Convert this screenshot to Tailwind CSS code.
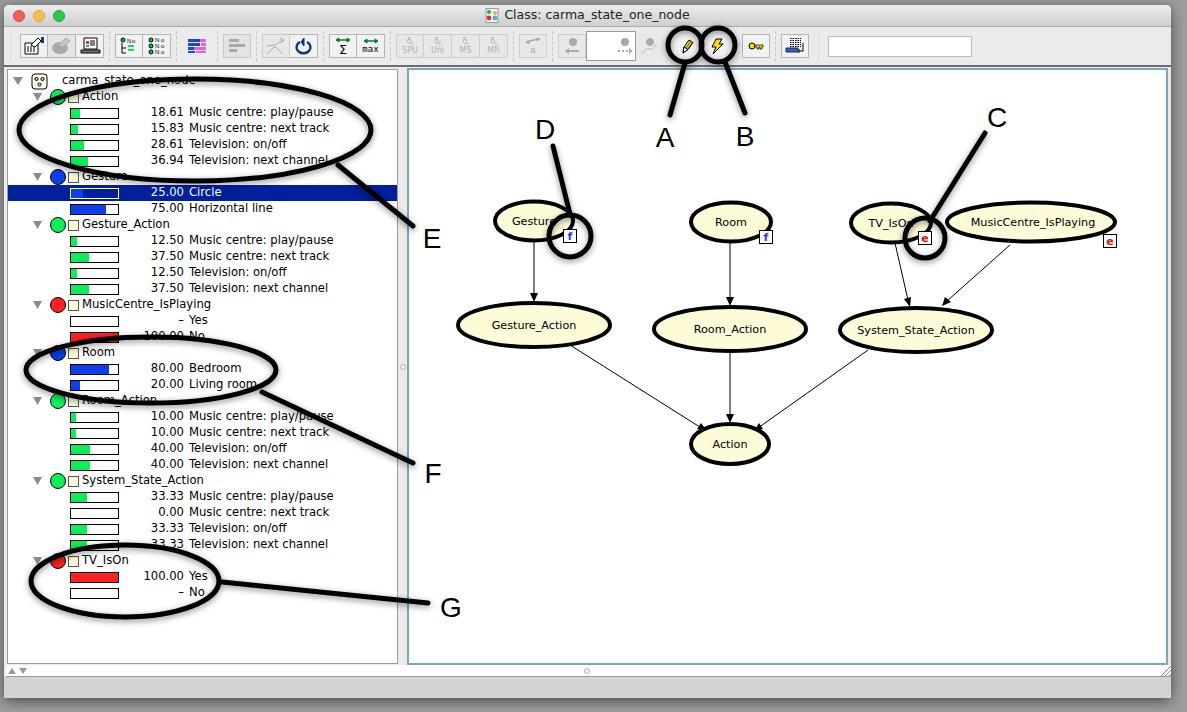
<!doctype html>
<html><head><meta charset="utf-8"><title>Class: carma_state_one_node</title>
<script src="https://cdn.jsdelivr.net/npm/@tailwindcss/browser@4"></script></head>
<body class="bg-[#9e9e9e] m-0 overflow-hidden font-['DejaVu_Sans',sans-serif] text-[11.6px] text-black">
<div class="relative w-[1187px] h-[712px] overflow-hidden">
<div class="ml-[4px] mt-[5px] w-[1167px] h-[693px] flex flex-col rounded-t-[5px] bg-[#ebebeb] shadow-[0_3px_14px_rgba(0,0,0,0.55)] overflow-hidden">
  <!-- title bar -->
  <div class="relative h-[22px] shrink-0 flex items-center justify-center bg-gradient-to-b from-[#ececec] to-[#cfcfcf] border-b border-[#a9a9a9] gap-[5px] text-[12.5px] text-[#222]">
    <div class="absolute left-[9px] top-[5px] flex gap-[8px]">
      <span class="w-3 h-3 rounded-full bg-[#f0605a] border border-[#d9483f]"></span>
      <span class="w-3 h-3 rounded-full bg-[#f6bd4f] border border-[#dda032]"></span>
      <span class="w-3 h-3 rounded-full bg-[#2fc64e] border border-[#1fa838]"></span>
    </div>
    <svg width="14" height="15" viewBox="0 0 14 15"><rect x="1" y="0.5" width="12" height="14" fill="#f4f4f4" stroke="#999"/><circle cx="4" cy="4" r="2" fill="#2ca84a"/><circle cx="10" cy="5" r="2" fill="#e8b830"/><circle cx="4" cy="10" r="2.4" fill="#e02a2a"/><circle cx="10" cy="10" r="2.4" fill="#35b8e0"/></svg>
    <span>Class: carma_state_one_node</span>
  </div>
  <!-- toolbar -->
  <div class="h-[40px] shrink-0 flex items-center pl-[6px] border-b-2 border-[#6e6e6e]">
    <i class="w-px h-[30px] bg-[#dadada] mr-[9px]"></i>
    <div class="flex border border-[#b5b5b5] h-[24px]">
      <button class="w-[27px] flex items-center justify-center bg-[#f2f2f2] border-r border-[#b5b5b5]"><svg width="22" height="20" viewBox="0 0 22 20" fill="none" stroke="#000"><path d="M2 7h13v11H2z" fill="#fff"/><path d="M4 11h9M4 13h9M4 15h9" stroke-dasharray="2 1"/><path d="M8 9l7-7 3 3-6 6z" fill="#fff"/><path d="M18 1h3v6h-3z" fill="#123a8c" stroke="none"/></svg></button>
      <button class="w-[28px] flex items-center justify-center bg-[#e4e4e4] border-r border-[#b5b5b5]"><svg width="22" height="20" viewBox="0 0 22 20"><ellipse cx="9" cy="12" rx="8" ry="6" fill="#a9a9a9"/><path d="M7 9l8-7 4 3-7 6z" fill="#c4c4c4" stroke="#aaa"/></svg></button>
      <button class="w-[27px] flex items-center justify-center bg-[#f2f2f2]"><svg width="22" height="20" viewBox="0 0 22 20" fill="none" stroke="#000"><path d="M5 2h13v11H5z" fill="#fff"/><path d="M7 5h3v3H7z" fill="#d33" stroke="none"/><path d="M7 9h3v2H7z" fill="#2a8" stroke="none"/><path d="M11 5h5M11 7h5M11 9h5"/><path d="M2 14h19v3H2z" fill="#777"/></svg></button>
    </div>
    <i class="w-0 h-[30px] border-l border-dashed border-[#c4c4c4] mx-[5px]"></i>
    <div class="flex border border-[#b5b5b5] h-[24px]">
      <button class="w-[27px] flex items-center justify-center bg-[#f2f2f2] border-r border-[#b5b5b5]"><svg width="20" height="18" viewBox="0 0 20 18" fill="none"><circle cx="4" cy="3" r="2" fill="#0c4" stroke="#000"/><path d="M3 6v10h4M3 11h4" stroke="#000"/><path d="M9 8h6v2H9zM9 12h6v2H9z" fill="#1d6"/><text x="8" y="6" font-size="6" fill="#000" font-family="Liberation Sans">N</text><text x="13" y="6" font-size="6" fill="#000" font-family="Liberation Sans">o</text></svg></button>
      <button class="w-[27px] flex items-center justify-center bg-[#f2f2f2]"><svg width="20" height="18" viewBox="0 0 20 18" fill="none" font-family="Liberation Sans" font-size="6"><circle cx="4" cy="3" r="2" fill="#0c4" stroke="#000"/><circle cx="4" cy="9" r="2" fill="#0c4" stroke="#000"/><circle cx="4" cy="15" r="2" fill="#0c4" stroke="#000"/><text x="8" y="5" fill="#000">N</text><text x="14" y="5" fill="#000">o</text><text x="8" y="11" fill="#000">N</text><text x="14" y="11" fill="#000">o</text><text x="8" y="17" fill="#000">N</text><text x="14" y="17" fill="#000">o</text></svg></button>
    </div>
    <i class="w-0 h-[30px] border-l border-dashed border-[#c4c4c4] ml-[5px] mr-[6px]"></i>
    <button class="w-[28px] h-[24px] flex items-center justify-center"><svg width="20" height="16" viewBox="0 0 20 16"><path d="M1 1h13v3H1zM1 9h6v3H1zM1 5h12v3H1z" fill="#1747d8"/><path d="M13 1h6v3h-6zM14 5h5v3h-5zM7 9h12v3H7zM9 13h10v2H9z" fill="#f05ce0"/><path d="M1 13h7v2H1z" fill="#1747d8"/></svg></button>
    <i class="w-0 h-[30px] border-l border-dashed border-[#c4c4c4] ml-[6px] mr-[5px]"></i>
    <button class="w-[28px] h-[24px] flex items-center justify-center border border-[#c9c9c9] bg-[#e4e4e4]"><svg width="18" height="14" viewBox="0 0 18 14"><path d="M1 0h10v3H1zM1 5h16v3H1zM1 10h8v3H1z" fill="#aaa"/></svg></button>
    <i class="w-0 h-[30px] border-l border-dashed border-[#c4c4c4] mx-[5px]"></i>
    <div class="flex h-[24px]">
      <button class="w-[28px] flex items-center justify-center border border-[#c9c9c9] bg-[#e8e8e8]"><svg width="20" height="18" viewBox="0 0 20 18" fill="none" stroke="#aaa"><path d="M1 9l8-1 8-5M1 17l7-7 3 1 5 6M14 1l4 2-3 3"/></svg></button>
      <button class="w-[28px] flex items-center justify-center border border-l-0 border-[#b5b5b5] bg-[#f2f2f2]"><svg width="20" height="18" viewBox="0 0 20 18" fill="none" stroke="#0d2f8c" stroke-width="2.4"><path d="M6 5a7 6 0 1 0 7 0"/><path d="M10 1v8l-3-4z" fill="#0d2f8c" stroke-width="1"/></svg></button>
    </div>
    <i class="w-0 h-[30px] border-l border-dashed border-[#c4c4c4] mx-[5px]"></i>
    <div class="flex h-[24px]">
      <button class="w-[28px] flex flex-col items-center justify-center border border-[#b5b5b5] bg-[#f2f2f2]"><svg width="16" height="6" viewBox="0 0 16 6" fill="#0b7a2c" stroke="#0b7a2c"><path d="M1 3h14" stroke-width="1.4"/><path d="M1 3l3-2v4zM15 3l-3-2v4z"/></svg><span class="text-[13px] leading-[13px]">Σ</span></button>
      <button class="w-[28px] flex flex-col items-center justify-center border border-l-0 border-[#b5b5b5] bg-[#f2f2f2]"><svg width="16" height="6" viewBox="0 0 16 6" fill="#0b7a2c" stroke="#0b7a2c"><path d="M1 3h14" stroke-width="1.4"/><path d="M1 3l3-2v4zM15 3l-3-2v4z"/></svg><span class="text-[9px] leading-[11px] font-['DejaVu_Sans_Mono',monospace]">max</span></button>
    </div>
    <i class="w-0 h-[30px] border-l border-dashed border-[#c4c4c4] mx-[5px]"></i>
    <div class="flex h-[24px] text-[#b0b0b0] text-[8px] leading-[9px] text-center">
      <button class="w-[28px] border border-[#cdcdcd] bg-[#e8e8e8]">δ<sub class="text-[6px]">J</sub><br>SPU</button>
      <button class="w-[28px] border border-l-0 border-[#cdcdcd] bg-[#e8e8e8]">δ<sub class="text-[6px]">J</sub><br>Uni</button>
      <button class="w-[28px] border border-l-0 border-[#cdcdcd] bg-[#e8e8e8]">δ<sub class="text-[6px]">J</sub><br>MS</button>
      <button class="w-[28px] border border-l-0 border-[#cdcdcd] bg-[#e8e8e8]">δ<sub class="text-[6px]">J</sub><br>MR</button>
    </div>
    <i class="w-0 h-[30px] border-l border-dashed border-[#c4c4c4] mx-[5px]"></i>
    <button class="w-[28px] h-[24px] flex flex-col items-center justify-center border border-[#cdcdcd] bg-[#e8e8e8] text-[#aaa] text-[9px] leading-[10px]"><svg width="16" height="8" viewBox="0 0 16 8" fill="#aaa" stroke="#aaa"><path d="M1 5l12-3" stroke-width="1.4"/><path d="M15 2l-3-1v3zM1 5l3-1v3z"/></svg>a</button>
    <i class="w-0 h-[30px] border-l border-dashed border-[#c4c4c4] mx-[5px]"></i>
    <div class="flex h-[30px] items-center">
      <button class="w-[28px] h-[24px] flex items-center justify-center border border-[#cdcdcd] bg-[#e8e8e8]"><svg width="16" height="18" viewBox="0 0 16 18" fill="#a9a9a9"><circle cx="9" cy="5" r="4"/><path d="M1 14l4-3v2h10v2H5v2z"/></svg></button>
      <div class="w-[50px] h-[30px] border border-[#9a9a9a] bg-white flex flex-col items-end justify-center pr-[1px]"><svg width="16" height="18" viewBox="0 0 16 18" fill="#a9a9a9"><circle cx="7" cy="5" r="4"/><path d="M0 13h2v2H0zM4 13h2v2H4zM8 13h2v2H8zM11 11l4 3-4 3z"/></svg></div>
      <button class="w-[28px] h-[24px] flex items-center justify-center bg-[#e8e8e8]"><svg width="18" height="18" viewBox="0 0 18 18" fill="#a9a9a9" stroke="#a9a9a9"><circle cx="9" cy="5" r="3.5"/><path d="M1 16l6-5 3 2 6-6" fill="none" stroke-dasharray="3 1"/></svg></button>
    </div>
    <div class="flex h-[24px] ml-[9px]">
      <button class="w-[29px] flex items-center justify-center bg-[#f2f2f2]"><svg width="14" height="17" viewBox="0 0 14 17" fill="none"><path d="M2 15l1-6 5-7 4 2.5-5 7z" fill="#f4d90b" stroke="#000"/><path d="M2 15l1-6 4 2.5z" fill="#fff" stroke="#000"/><path d="M5 10l5-7M7 11l4-6" stroke="#000" stroke-width=".6"/></svg></button>
      <button class="w-[29px] flex items-center justify-center bg-[#f2f2f2]"><svg width="14" height="17" viewBox="0 0 14 17"><path d="M6 1h6L9 6h4L3 16l3-7H2z" fill="#f4d90b" stroke="#000"/></svg></button>
    </div>
    <i class="w-0 h-[30px] ml-[5px] mr-[5px] border-l border-transparent"></i>
    <button class="w-[28px] h-[24px] flex items-center justify-center border border-[#b5b5b5] bg-[#f2f2f2]"><svg width="16" height="9" viewBox="0 0 16 9"><circle cx="4" cy="4" r="3" fill="#f4d90b" stroke="#000"/><path d="M7 3h8v2h-1v2h-2V5h-1v2H9V5H7z" fill="#f4d90b" stroke="#000" stroke-width=".7"/></svg></button>
    <i class="w-0 h-[30px] border-l border-dashed border-[#c4c4c4] mx-[5px]"></i>
    <button class="w-[28px] h-[24px] flex items-center justify-center border border-[#b5b5b5] bg-[#f2f2f2]"><svg width="20" height="18" viewBox="0 0 20 18"><path d="M5 1.5h11M5 3.5h11M5 5.5h11M5 7.5h11M5 9.5h11" stroke="#000" stroke-dasharray="1.5 1"/><path d="M1 11h12v4H1z" fill="#3a5fb0" stroke="#12286a"/><path d="M18 6v8h-4M14 12v4" stroke="#000" fill="none"/></svg></button>
    <i class="w-px h-[30px] bg-[#dadada] mx-[9px]"></i>
    <div class="w-[144px] h-[21px] border border-[#bcbcbc] bg-white"></div>
  </div>
  <!-- panes -->
  <div class="h-[597px] shrink-0 flex pt-[2px] pl-[2px] pr-[4px]">
    <div class="w-[391px] ml-px border border-[#9b9b9b] bg-white overflow-hidden pt-[3px]">
      <div class="h-4 flex items-center"><svg class="ml-[5px]" width="10" height="8" viewBox="0 0 10 8"><path d="M0 0h10L5 8z" fill="#8c8c8c"/></svg><svg class="ml-[8px]" width="17" height="17" viewBox="0 0 17 17" fill="none" stroke="#000"><rect x="1" y="1" width="15" height="15" rx="3" fill="#fff"/><circle cx="5.5" cy="6" r="1.6" fill="#f2dc2c"/><circle cx="11.5" cy="6" r="1.6" fill="#f2dc2c"/><circle cx="8.5" cy="11.5" r="1.6" fill="#f2dc2c"/></svg><span class="ml-[14px]">carma_state_one_node</span></div>

      <div class="h-4 flex items-center"><svg class="ml-[25px]" width="9" height="8" viewBox="0 0 9 8"><path d="M0 0h9L4.5 8z" fill="#8c8c8c"/></svg><span class="ml-[8px] w-4 h-4 rounded-full border border-black bg-[#0bef5c]"></span><span class="ml-[2px] w-[11px] h-[11px] border border-[#555] bg-[#fdfbd8]"></span><span class="ml-[3px]">Action</span></div>
      <div class="h-4 flex items-center pl-[62px]"><div class="w-[49px] h-[11px] border border-black"><div class="h-full bg-[#0bef5c]" style="width:18.61%"></div></div><span class="w-[65px] text-right">18.61</span><span class="ml-[5px]">Music centre: play/pause</span></div>
      <div class="h-4 flex items-center pl-[62px]"><div class="w-[49px] h-[11px] border border-black"><div class="h-full bg-[#0bef5c]" style="width:15.83%"></div></div><span class="w-[65px] text-right">15.83</span><span class="ml-[5px]">Music centre: next track</span></div>
      <div class="h-4 flex items-center pl-[62px]"><div class="w-[49px] h-[11px] border border-black"><div class="h-full bg-[#0bef5c]" style="width:28.61%"></div></div><span class="w-[65px] text-right">28.61</span><span class="ml-[5px]">Television: on/off</span></div>
      <div class="h-4 flex items-center pl-[62px]"><div class="w-[49px] h-[11px] border border-black"><div class="h-full bg-[#0bef5c]" style="width:36.94%"></div></div><span class="w-[65px] text-right">36.94</span><span class="ml-[5px]">Television: next channel</span></div>

      <div class="h-4 flex items-center"><svg class="ml-[25px]" width="9" height="8" viewBox="0 0 9 8"><path d="M0 0h9L4.5 8z" fill="#8c8c8c"/></svg><span class="ml-[8px] w-4 h-4 rounded-full border border-black bg-[#0b3ff0]"></span><span class="ml-[2px] w-[11px] h-[11px] border border-[#555] bg-[#fdfbd8]"></span><span class="ml-[3px]">Gesture</span></div>
      <div class="h-4 flex items-center pl-[62px] bg-[#00209c] text-white"><div class="w-[49px] h-[11px] border border-white"><div class="h-full bg-[#0b3ff0]" style="width:25%"></div></div><span class="w-[65px] text-right">25.00</span><span class="ml-[5px]">Circle</span></div>
      <div class="h-4 flex items-center pl-[62px]"><div class="w-[49px] h-[11px] border border-black"><div class="h-full bg-[#0b3ff0]" style="width:75%"></div></div><span class="w-[65px] text-right">75.00</span><span class="ml-[5px]">Horizontal line</span></div>

      <div class="h-4 flex items-center"><svg class="ml-[25px]" width="9" height="8" viewBox="0 0 9 8"><path d="M0 0h9L4.5 8z" fill="#8c8c8c"/></svg><span class="ml-[8px] w-4 h-4 rounded-full border border-black bg-[#0bef5c]"></span><span class="ml-[2px] w-[11px] h-[11px] border border-[#555] bg-[#fdfbd8]"></span><span class="ml-[3px]">Gesture_Action</span></div>
      <div class="h-4 flex items-center pl-[62px]"><div class="w-[49px] h-[11px] border border-black"><div class="h-full bg-[#0bef5c]" style="width:12.5%"></div></div><span class="w-[65px] text-right">12.50</span><span class="ml-[5px]">Music centre: play/pause</span></div>
      <div class="h-4 flex items-center pl-[62px]"><div class="w-[49px] h-[11px] border border-black"><div class="h-full bg-[#0bef5c]" style="width:37.5%"></div></div><span class="w-[65px] text-right">37.50</span><span class="ml-[5px]">Music centre: next track</span></div>
      <div class="h-4 flex items-center pl-[62px]"><div class="w-[49px] h-[11px] border border-black"><div class="h-full bg-[#0bef5c]" style="width:12.5%"></div></div><span class="w-[65px] text-right">12.50</span><span class="ml-[5px]">Television: on/off</span></div>
      <div class="h-4 flex items-center pl-[62px]"><div class="w-[49px] h-[11px] border border-black"><div class="h-full bg-[#0bef5c]" style="width:37.5%"></div></div><span class="w-[65px] text-right">37.50</span><span class="ml-[5px]">Television: next channel</span></div>

      <div class="h-4 flex items-center"><svg class="ml-[25px]" width="9" height="8" viewBox="0 0 9 8"><path d="M0 0h9L4.5 8z" fill="#8c8c8c"/></svg><span class="ml-[8px] w-4 h-4 rounded-full border border-black bg-[#ff2020]"></span><span class="ml-[2px] w-[11px] h-[11px] border border-[#555] bg-[#fdfbd8]"></span><span class="ml-[3px]">MusicCentre_IsPlaying</span></div>
      <div class="h-4 flex items-center pl-[62px]"><div class="w-[49px] h-[11px] border border-black"></div><span class="w-[65px] text-right">–</span><span class="ml-[5px]">Yes</span></div>
      <div class="h-4 flex items-center pl-[62px]"><div class="w-[49px] h-[11px] border border-black"><div class="h-full bg-[#ff2020]" style="width:100%"></div></div><span class="w-[65px] text-right">100.00</span><span class="ml-[5px]">No</span></div>

      <div class="h-4 flex items-center"><svg class="ml-[25px]" width="9" height="8" viewBox="0 0 9 8"><path d="M0 0h9L4.5 8z" fill="#8c8c8c"/></svg><span class="ml-[8px] w-4 h-4 rounded-full border border-black bg-[#0b3ff0]"></span><span class="ml-[2px] w-[11px] h-[11px] border border-[#555] bg-[#fdfbd8]"></span><span class="ml-[3px]">Room</span></div>
      <div class="h-4 flex items-center pl-[62px]"><div class="w-[49px] h-[11px] border border-black"><div class="h-full bg-[#0b3ff0]" style="width:80%"></div></div><span class="w-[65px] text-right">80.00</span><span class="ml-[5px]">Bedroom</span></div>
      <div class="h-4 flex items-center pl-[62px]"><div class="w-[49px] h-[11px] border border-black"><div class="h-full bg-[#0b3ff0]" style="width:20%"></div></div><span class="w-[65px] text-right">20.00</span><span class="ml-[5px]">Living room</span></div>

      <div class="h-4 flex items-center"><svg class="ml-[25px]" width="9" height="8" viewBox="0 0 9 8"><path d="M0 0h9L4.5 8z" fill="#8c8c8c"/></svg><span class="ml-[8px] w-4 h-4 rounded-full border border-black bg-[#0bef5c]"></span><span class="ml-[2px] w-[11px] h-[11px] border border-[#555] bg-[#fdfbd8]"></span><span class="ml-[3px]">Room_Action</span></div>
      <div class="h-4 flex items-center pl-[62px]"><div class="w-[49px] h-[11px] border border-black"><div class="h-full bg-[#0bef5c]" style="width:10%"></div></div><span class="w-[65px] text-right">10.00</span><span class="ml-[5px]">Music centre: play/pause</span></div>
      <div class="h-4 flex items-center pl-[62px]"><div class="w-[49px] h-[11px] border border-black"><div class="h-full bg-[#0bef5c]" style="width:10%"></div></div><span class="w-[65px] text-right">10.00</span><span class="ml-[5px]">Music centre: next track</span></div>
      <div class="h-4 flex items-center pl-[62px]"><div class="w-[49px] h-[11px] border border-black"><div class="h-full bg-[#0bef5c]" style="width:40%"></div></div><span class="w-[65px] text-right">40.00</span><span class="ml-[5px]">Television: on/off</span></div>
      <div class="h-4 flex items-center pl-[62px]"><div class="w-[49px] h-[11px] border border-black"><div class="h-full bg-[#0bef5c]" style="width:40%"></div></div><span class="w-[65px] text-right">40.00</span><span class="ml-[5px]">Television: next channel</span></div>

      <div class="h-4 flex items-center"><svg class="ml-[25px]" width="9" height="8" viewBox="0 0 9 8"><path d="M0 0h9L4.5 8z" fill="#8c8c8c"/></svg><span class="ml-[8px] w-4 h-4 rounded-full border border-black bg-[#0bef5c]"></span><span class="ml-[2px] w-[11px] h-[11px] border border-[#555] bg-[#fdfbd8]"></span><span class="ml-[3px]">System_State_Action</span></div>
      <div class="h-4 flex items-center pl-[62px]"><div class="w-[49px] h-[11px] border border-black"><div class="h-full bg-[#0bef5c]" style="width:33.33%"></div></div><span class="w-[65px] text-right">33.33</span><span class="ml-[5px]">Music centre: play/pause</span></div>
      <div class="h-4 flex items-center pl-[62px]"><div class="w-[49px] h-[11px] border border-black"></div><span class="w-[65px] text-right">0.00</span><span class="ml-[5px]">Music centre: next track</span></div>
      <div class="h-4 flex items-center pl-[62px]"><div class="w-[49px] h-[11px] border border-black"><div class="h-full bg-[#0bef5c]" style="width:33.33%"></div></div><span class="w-[65px] text-right">33.33</span><span class="ml-[5px]">Television: on/off</span></div>
      <div class="h-4 flex items-center pl-[62px]"><div class="w-[49px] h-[11px] border border-black"><div class="h-full bg-[#0bef5c]" style="width:33.33%"></div></div><span class="w-[65px] text-right">33.33</span><span class="ml-[5px]">Television: next channel</span></div>

      <div class="h-4 flex items-center"><svg class="ml-[25px]" width="9" height="8" viewBox="0 0 9 8"><path d="M0 0h9L4.5 8z" fill="#8c8c8c"/></svg><span class="ml-[8px] w-4 h-4 rounded-full border border-black bg-[#ff2020]"></span><span class="ml-[2px] w-[11px] h-[11px] border border-[#555] bg-[#fdfbd8]"></span><span class="ml-[3px]">TV_IsOn</span></div>
      <div class="h-4 flex items-center pl-[62px]"><div class="w-[49px] h-[11px] border border-black"><div class="h-full bg-[#ff2020]" style="width:100%"></div></div><span class="w-[65px] text-right">100.00</span><span class="ml-[5px]">Yes</span></div>
      <div class="h-4 flex items-center pl-[62px]"><div class="w-[49px] h-[11px] border border-black"></div><span class="w-[65px] text-right">–</span><span class="ml-[5px]">No</span></div>
    </div>
    <div class="w-[10px] flex items-center justify-center"><span class="w-[6px] h-[6px] rounded-full border border-[#b5b5b5] bg-[#f4f4f4]"></span></div>
    <div class="flex-1 border border-[#5ab0ea] outline outline-1 outline-[#9b9b9b] bg-white"></div>
  </div>
  <!-- bottom strip -->
  <div class="h-[12px] shrink-0 mt-px ml-[2px] flex items-center justify-between bg-white border-b border-[#9a9a9a] pl-[2px] relative">
    <div class="flex gap-[3px]"><svg width="8" height="6" viewBox="0 0 8 6"><path d="M4 0l4 6H0z" fill="#999"/></svg><svg width="8" height="6" viewBox="0 0 8 6"><path d="M0 0h8L4 6z" fill="#999"/></svg></div>
    <span class="absolute left-[578px] top-[3px] w-[6px] h-[6px] rounded-full border border-[#b5b5b5] bg-[#f4f4f4]"></span>
    <svg width="10" height="11" viewBox="0 0 10 11" stroke="#888" fill="none"><path d="M0 11L10 1M4 11l6-6M8 11l2-2"/></svg>
  </div>
  <div class="flex-1 bg-[#d3d3d3]"></div>
</div>

<!-- graph edges and nodes: a diagram on a free canvas -->
<svg class="absolute inset-0" width="1187" height="712" viewBox="0 0 1187 712">
  <g stroke="#000" fill="none">
    <path d="M534 242V296M730 243V300M895 243L908 300M1010 245L947 301M570 345L703 429M730 352V416M868 350L758 428"/>
  </g>
  <g fill="#000">
    <path d="M534 302l-4-9h8zM730 306l-4-9h8zM910 307l-6-8 7-2zM942 306l3-9 6 5zM707 431l-10-2 4-6zM730 423l-4-9h8zM754 431l5-8 4 6z"/>
  </g>
  <g fill="#fdfbd8" stroke="#000" stroke-width="4">
    <ellipse cx="534" cy="221" rx="39" ry="19.5"/><ellipse cx="731" cy="222" rx="40" ry="19.5"/><ellipse cx="891" cy="223" rx="40" ry="19.5"/><ellipse cx="1031" cy="222" rx="84" ry="19.5"/>
    <ellipse cx="534" cy="325" rx="76" ry="22"/><ellipse cx="730" cy="329" rx="76" ry="22"/><ellipse cx="916" cy="330" rx="76" ry="22"/><ellipse cx="730" cy="444" rx="39" ry="20"/>
  </g>
  <g font-family="DejaVu Sans" font-size="11.2" text-anchor="middle" fill="#000">
    <text x="534" y="225">Gesture</text><text x="731" y="226">Room</text><text x="891" y="227">TV_IsOn</text><text x="1033" y="226">MusicCentre_IsPlaying</text>
    <text x="534" y="329">Gesture_Action</text><text x="730" y="333">Room_Action</text><text x="916" y="334">System_State_Action</text><text x="730" y="448">Action</text>
  </g>
  <g fill="#fff" stroke="#000"><rect x="563.5" y="229.5" width="13" height="13"/><rect x="759.5" y="230.5" width="13" height="13"/><rect x="918.5" y="231.5" width="13" height="13"/><rect x="1103.5" y="234.5" width="13" height="13"/></g>
  <g font-family="DejaVu Sans" font-size="11" font-weight="bold" text-anchor="middle">
    <text x="570" y="240" fill="#3030f0">f</text><text x="766" y="241" fill="#3030f0">f</text><text x="925" y="242" fill="#e01010">e</text><text x="1110" y="245" fill="#e01010">e</text>
  </g>
</svg>
<!-- hand-drawn annotations over the screenshot -->
<svg class="absolute inset-0 drop-shadow-[0_2px_3px_rgba(0,0,0,0.45)]" width="1187" height="712" viewBox="0 0 1187 712" fill="none" stroke="#000" stroke-width="5" stroke-linecap="round">
  <ellipse cx="195" cy="130" rx="176" ry="51"/>
  <ellipse cx="151" cy="370" rx="125" ry="33"/>
  <ellipse cx="125" cy="581" rx="94" ry="36"/>
  <circle cx="685" cy="45" r="17"/><circle cx="718" cy="45" r="17"/>
  <circle cx="925" cy="238" r="20"/><circle cx="570" cy="236" r="21"/>
  <path d="M685 63L670 115M725 62L745 113M985 133L930 221M553 146L570 214M338 165L413 226M262 392L413 463M222 582L428 603"/>
</svg>
<svg class="absolute inset-0" width="1187" height="712" viewBox="0 0 1187 712" font-family="Liberation Sans" font-size="28" text-anchor="middle" fill="#000">
  <text x="665" y="147">A</text><text x="745" y="146">B</text><text x="997" y="127">C</text><text x="545" y="139">D</text><text x="432" y="248">E</text><text x="433" y="483">F</text><text x="451" y="617">G</text>
</svg>
</div>
</body></html>
